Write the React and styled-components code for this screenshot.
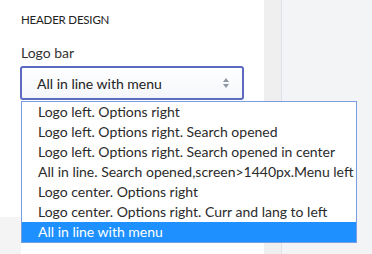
import React from "react";
import styled, { createGlobalStyle } from "styled-components";

const GlobalStyle = createGlobalStyle`
  html, body { margin: 0; padding: 0; }
  body {
    font-family: "Lato", "Noto Sans", sans-serif;
    color: #333;
    background: #f3f4f6;
  }
`;

const Page = styled.div`
  position: relative;
  display: flex;
  width: 372px;
  height: 254px;
  overflow: hidden;
`;

const Panel = styled.div`
  width: 264px;
  background: #fff;
  display: flex;
  flex-direction: column;
  padding: 13px 0 0 20px;
  box-sizing: border-box;
`;

const Gutter = styled.div`
  width: 17px;
  background: #efefef;
  border-right: 1px solid #dde2ea;
`;

const Side = styled.div`
  flex: 1;
  background: #f3f4f6;
`;

const Heading = styled.div`
  font-size: 11.5px;
  line-height: 14px;
  letter-spacing: -0.2px;
  text-transform: uppercase;
  color: #222;
  padding-left: 1px;
`;

const Label = styled.div`
  margin-top: 17px;
  font-size: 14px;
  line-height: 18px;
  color: #333;
  padding-left: 1px;
`;

const SelectBox = styled.div`
  margin-top: 4px;
  width: 224px;
  height: 34px;
  box-sizing: border-box;
  border: 2px solid #5c6bc0;
  border-radius: 3px;
  background: linear-gradient(#ffffff, #f4f6fa);
  display: flex;
  align-items: center;
  justify-content: space-between;
  padding: 0 12px 0 15px;
  font-size: 14px;
  color: #222;
`;

const Below = styled.div`
  margin-top: 117px;
  margin-left: -20px;
  width: 21px;
  flex: 1;
  background: #f4f4f4;
`;

const Menu = styled.ul`
  position: absolute;
  top: 101px;
  left: 21px;
  width: 336px;
  margin: 0;
  padding: 0;
  list-style: none;
  background: #fff;
  border: 1px solid #7a9ee0;
  box-sizing: border-box;
`;

const Item = styled.li`
  height: 20px;
  line-height: 20px;
  padding-left: 16px;
  font-size: 14px;
  white-space: nowrap;
  color: ${(p) => (p.$active ? "#fff" : "#2b2b2b")};
  background: ${(p) => (p.$active ? "#1e90ff" : "transparent")};
`;

const Arrows = () => (
  <svg width="8" height="12" viewBox="0 0 8 12">
    <path d="M4 1 L7 5 L1 5 Z" fill="#8c97a4" />
    <path d="M4 11 L7 7 L1 7 Z" fill="#8c97a4" />
  </svg>
);

const options = [
  "Logo left. Options right",
  "Logo left. Options right. Search opened",
  "Logo left. Options right. Search opened in center",
  "All in line. Search opened,screen>1440px.Menu left",
  "Logo center. Options right",
  "Logo center. Options right. Curr and lang to left",
  "All in line with menu",
];

export default function App() {
  return (
    <>
      <GlobalStyle />
      <Page>
        <Panel>
          <Heading>Header design</Heading>
          <Label>Logo bar</Label>
          <SelectBox>
            <span>All in line with menu</span>
            <Arrows />
          </SelectBox>
          <Below />
        </Panel>
        <Gutter />
        <Side />
        <Menu>
          {options.map((o, i) => (
            <Item key={o} $active={i === options.length - 1}>
              {o}
            </Item>
          ))}
        </Menu>
      </Page>
    </>
  );
}
